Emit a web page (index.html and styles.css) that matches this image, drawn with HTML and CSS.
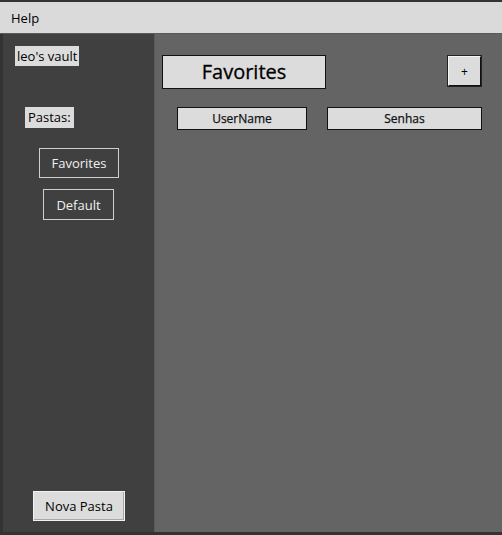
FILE: index.html
```html
<!DOCTYPE html>
<html>
<head>
<meta charset="utf-8">
<link rel="stylesheet" href="styles.css">
</head>
<body>
<div class="window">
  <div class="menubar"><span class="menu-item">Help</span></div>
  <div class="content">
    <aside class="sidebar">
      <div class="label vault">leo's vault</div>
      <div class="label pastas">Pastas:</div>
      <div class="folders">
        <button class="folder fav">Favorites</button>
        <button class="folder def">Default</button>
      </div>
      <div class="spacer"></div>
      <button class="new-folder">Nova Pasta</button>
    </aside>
    <main class="main">
      <div class="header">
        <div class="title">Favorites</div>
        <button class="add">+</button>
      </div>
      <div class="columns">
        <div class="col user">UserName</div>
        <div class="col pass">Senhas</div>
      </div>
    </main>
  </div>
</div>
</body>
</html>
```

FILE: styles.css
```css
* { box-sizing: border-box; }
html, body { margin: 0; padding: 0; }
body {
  background: #333333;
  font-family: "Open Sans", "Noto Sans", sans-serif;
  width: 502px;
  height: 535px;
  overflow: hidden;
}
.window {
  display: flex;
  flex-direction: column;
  height: 535px;
  padding: 2px 0 3px 3px;
}
.menubar {
  height: 32px;
  background: #dadada;
  border-bottom: 1px solid #5a5a5a;
  display: flex;
  align-items: center;
  margin-left: -3px;
  padding-left: 11px;
}
.menu-item {
  font-size: 13px;
  color: #000;
}
.content {
  flex: 1;
  display: flex;
}
.sidebar {
  flex: 0 0 151px;
  width: 151px;
  background: #404040;
  display: flex;
  flex-direction: column;
  align-items: flex-start;
  padding-top: 12px;
  padding-bottom: 11px;
}
.label {
  background: #dcdcdc;
  color: #000;
  font-size: 13px;
  line-height: 20px;
  padding: 0 2px;
}
.vault { margin-left: 12px; height: 20px; }
.pastas { margin-left: 22px; margin-top: 41px; height: 21px; line-height: 21px; padding: 0 3px; }
.folders {
  align-self: stretch;
  display: flex;
  flex-direction: column;
  align-items: center;
  gap: 11px;
  margin-top: 20px;
}
.folder {
  background: transparent;
  border: 1px solid #cfcfcf;
  color: #f0f0f0;
  font-family: inherit;
  font-size: 13px;
  padding: 0;
  margin: 0;
}
.fav { width: 80px; height: 30px; margin-left: 1px; }
.def { width: 71px; height: 31px; }
.spacer { flex: 1; }
.new-folder {
  align-self: center;
  width: 92px;
  height: 30px;
  margin-left: 1px;
  background: #dcdcdc;
  border: 1px solid #f2f2f2;
  box-shadow: inset -1px -1px 0 #a8a8a8;
  color: #000;
  font-family: inherit;
  font-size: 13px;
  padding: 0;
}
.main {
  flex: 1 1 0;
  min-width: 0;
  background: #646464;
  border-left: 1px solid #5a5a5a;
  padding: 21px 21px 0 7px;
}
.header {
  display: flex;
  justify-content: space-between;
  align-items: flex-start;
}
.title {
  width: 164px;
  height: 34px;
  background: #dcdcdc;
  border: 1px solid #111;
  font-size: 20px;
  -webkit-text-stroke: 0.3px #000;
  line-height: 32px;
  text-align: center;
  color: #000;
}
.add {
  width: 33px;
  height: 30px;
  margin-top: 1px;
  background: #dcdcdc;
  border: 1px solid #111;
  border-top-color: #f4f4f4;
  border-left-color: #f4f4f4;
  outline: 1px solid #222;
  outline-offset: 0;
  font-family: inherit;
  font-size: 12px;
  color: #000;
  padding: 0;
}
.columns {
  display: flex;
  gap: 20px;
  margin-top: 18px;
  padding-left: 15px;
}
.col {
  flex: 0 0 auto;
  height: 23px;
  background: #dcdcdc;
  border: 1px solid #111;
  font-size: 12px;
  -webkit-text-stroke: 0.25px #111;
  line-height: 21px;
  text-align: center;
  color: #111;
}
.user { width: 130px; }
.pass { width: 155px; }
```
